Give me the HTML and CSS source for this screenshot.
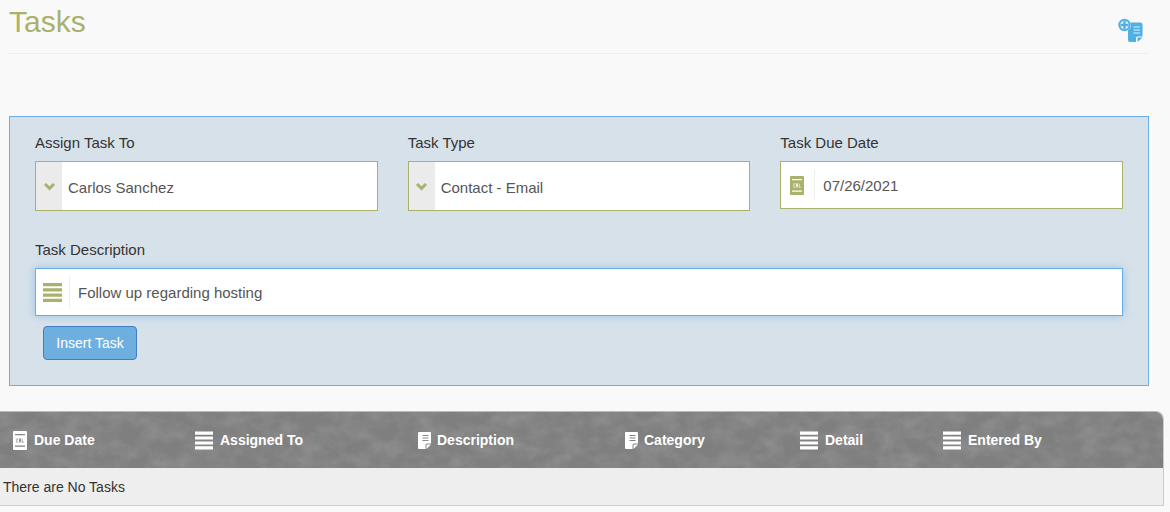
FILE: index.html
```html
<!DOCTYPE html>
<html lang="en">
<head>
<meta charset="utf-8">
<title>Tasks</title>
<link rel="stylesheet" href="styles.css">
</head>
<body>
<svg class="defs" width="0" height="0" aria-hidden="true">
  <defs>
    <symbol id="i-cal" viewBox="0 0 14 19">
      <path fill-rule="evenodd" d="M1 0h12a1 1 0 0 1 1 1v17a1 1 0 0 1-1 1H1a1 1 0 0 1-1-1V1a1 1 0 0 1 1-1zM2 3v1.300h10V3zM2 14.500v1.300h10v-1.300zM3.500 7.500v4h1.800v-.7H4.200V8.200h1.100v-.7zM6 7.500v4h.7V10h.6v1.500H8v-4zM6.700 8.200h.6v1.100h-.6zM8.800 7.500v4h2v-.7H9.500V7.500z"/>
    </symbol>
    <symbol id="i-lines" viewBox="0 0 19 19">
      <path d="M0 0h19v3.300H0zM0 5.230h19v3.300H0zM0 10.470h19v3.300H0zM0 15.700h19V19H0z"/>
    </symbol>
    <symbol id="i-doc" viewBox="0 0 13 17">
      <path fill-rule="evenodd" d="M1 0h11a1 1 0 0 1 1 1v10.500H9a1.500 1.500 0 0 0-1.500 1.500v4H1a1 1 0 0 1-1-1V1a1 1 0 0 1 1-1zM4.500 3v1h6V3zM4.500 5.500v1h6v-1zM4.500 8v1h6V8z"/>
      <path d="M8.500 17v-4a.6.6 0 0 1 .6-.6H13z"/>
    </symbol>
    <filter id="stone" x="0" y="0" width="100%" height="100%">
      <feTurbulence type="fractalNoise" baseFrequency="0.05 0.07" numOctaves="6" seed="11"/>
      <feColorMatrix values="0 0 0 0 0.58  0 0 0 0 0.58  0 0 0 0 0.58  0.4 0 0 0 -0.14"/>
    </filter>
  </defs>
</svg>

<header class="page-head">
  <h1 class="page-title">Tasks</h1>
  <svg class="add-icon" viewBox="0 0 26 24" width="26" height="24" aria-hidden="true">
    <path fill="#4fb0e3" d="M10 4.500h12.500a2 2 0 0 1 2 2V18.500h-5a1.500 1.500 0 0 0-1.500 1.500v4H12a2 2 0 0 1-2-2z"/>
    <path fill="#4fb0e3" d="M19.500 24v-4a.6.600 0 0 1 .6-.6h4.400z"/>
    <path stroke="#dff1fa" stroke-width="1.200" d="M15.500 9h6.500M15.500 12h6.500M15.500 15h6.500"/>
    <circle cx="6.500" cy="7" r="6.500" fill="#f9f9f9"/>
    <circle cx="6.500" cy="7" r="5.200" fill="#e8f5fb" stroke="#4fb0e3" stroke-width="2"/>
    <path stroke="#4fb0e3" stroke-width="2.400" d="M6.500 3v8M2.500 7h8"/>
  </svg>
</header>

<form class="panel">
  <div class="row-three">
    <div class="field">
      <label class="label">Assign Task To</label>
      <div class="select">
        <span class="select-arrow">
          <svg viewBox="0 0 11 8" width="11" height="8" aria-hidden="true"><path fill="#a9b16a" d="M0 2l2-2 3.500 3.200L9 0l2 2-5.500 5.500z"/></svg>
        </span>
        <span class="select-value">Carlos Sanchez</span>
      </div>
    </div>
    <div class="field">
      <label class="label">Task Type</label>
      <div class="select">
        <span class="select-arrow">
          <svg viewBox="0 0 11 8" width="11" height="8" aria-hidden="true"><path fill="#a9b16a" d="M0 2l2-2 3.500 3.200L9 0l2 2-5.500 5.500z"/></svg>
        </span>
        <span class="select-value">Contact - Email</span>
      </div>
    </div>
    <div class="field">
      <label class="label">Task Due Date</label>
      <div class="input input-date">
        <span class="input-icon input-icon-cal"><svg class="olive" width="14" height="19"><use href="#i-cal"/></svg></span>
        <span class="input-value">07/26/2021</span>
      </div>
    </div>
  </div>
  <div class="field field-desc">
    <label class="label">Task Description</label>
    <div class="input input-focus">
      <span class="input-icon input-icon-lines"><svg class="olive" width="19" height="19"><use href="#i-lines"/></svg></span>
      <span class="input-value">Follow up regarding hosting</span>
    </div>
  </div>
  <button class="btn" type="button">Insert Task</button>
</form>

<section class="table">
  <div class="thead">
    <svg class="texture" aria-hidden="true" width="100%" height="100%"><rect width="100%" height="100%" filter="url(#stone)"/></svg>
    <div class="th th-date"><svg width="14" height="19"><use href="#i-cal"/></svg>Due Date</div>
    <div class="th th-assigned"><svg width="18" height="19"><use href="#i-lines"/></svg>Assigned To</div>
    <div class="th th-desc"><svg class="doc" width="13" height="17"><use href="#i-doc"/></svg>Description</div>
    <div class="th th-cat"><svg class="doc" width="13" height="17"><use href="#i-doc"/></svg>Category</div>
    <div class="th th-detail"><svg width="18" height="19"><use href="#i-lines"/></svg>Detail</div>
    <div class="th th-entered"><svg width="18" height="19"><use href="#i-lines"/></svg>Entered By</div>
  </div>
  <div class="tbody">There are No Tasks</div>
</section>
</body>
</html>
```
FILE: styles.css
```css
* { box-sizing: border-box; }
html, body { margin: 0; padding: 0; }
body {
  width: 1170px;
  height: 512px;
  overflow: hidden;
  background: #f9f9f9;
  color: #333;
  font-family: "Liberation Sans", Arial, sans-serif;
  font-size: 14px;
}
.defs { display: block; height: 0; }

.page-head {
  display: flex;
  justify-content: space-between;
  align-items: flex-start;
  height: 54px;
  margin: 0 21px 0 9px;
  border-bottom: 1px solid #eee;
}
.page-title {
  margin: 5px 0 0;
  font-size: 30px;
  font-weight: 400;
  line-height: 33px;
  color: #a9b16a;
}
.add-icon { margin: 18px 5px 0 0; }

.panel {
  width: 1140px;
  height: 270px;
  margin: 62px 0 0 9px;
  padding: 16px 25px 0;
  background: #d7e1ea;
  border: 1px solid #6caee3;
}
.row-three {
  display: grid;
  grid-template-columns: repeat(3, 1fr);
  column-gap: 30px;
  height: 94px;
}
.label {
  display: block;
  height: 28px;
  font-size: 15px;
  line-height: 20px;
  color: #333;
}
.select, .input {
  display: flex;
  align-items: center;
  background: #fff;
  border: 1px solid #a9b16a;
  color: #555;
  font-size: 15px;
}
.select { height: 50px; }
.input { height: 48px; }
.select-arrow {
  display: flex;
  align-items: center;
  justify-content: center;
  width: 26px;
  height: 100%;
  padding-top: 2px;
  background: #ebebeb;
}
.select-arrow svg { display: block; }
.select-value { padding: 2px 0 0 6px; }
.input-icon {
  display: flex;
  align-items: center;
  border-right: 1px solid #eee;
  height: 30px;
}
.input-icon-cal { width: 34px; padding-left: 9px; }
.input-icon-lines { width: 34px; padding-left: 7px; }
.input-value { padding-left: 8px; }
.olive { fill: #a9b16a; display: block; }
.field-desc { margin-top: 13px; }
.input-focus {
  border-color: #6caee3;
  box-shadow: 0 0 8px rgba(102, 175, 233, .6);
}
.btn {
  display: block;
  width: 94px;
  height: 34px;
  margin: 10px 0 0 8px;
  padding: 0;
  background: #6fafe0;
  border: 1px solid #3f80c0;
  border-radius: 4px;
  color: #fff;
  font: 14px "Liberation Sans", Arial, sans-serif;
}

.table {
  width: 1164px;
  margin-top: 25px;
  border-right: 1px solid #ccc;
  border-bottom: 1px solid #ccc;
  border-top-right-radius: 8px;
}
.thead {
  position: relative;
  display: flex;
  align-items: center;
  height: 57px;
  background: #7f7f7f;
  border-top: 1px solid #bbb;
  border-top-right-radius: 8px;
  overflow: hidden;
  color: #fff;
  font-weight: 700;
  font-size: 14px;
}
.texture { position: absolute; inset: 0; }
.th {
  position: relative;
  display: flex;
  align-items: center;
  fill: #fff;
}
.th svg { flex: none; margin-right: 7px; }
.th .doc { margin-right: 6px; }
.th-date { width: 182px; margin-left: 13px; }
.th-assigned { width: 223px; }
.th-desc { width: 207px; }
.th-cat { width: 175px; }
.th-detail { width: 143px; }
.tbody {
  height: 37px;
  padding: 1px 3px 0;
  line-height: 37px;
  background: #eee;
  color: #333;
}
```
